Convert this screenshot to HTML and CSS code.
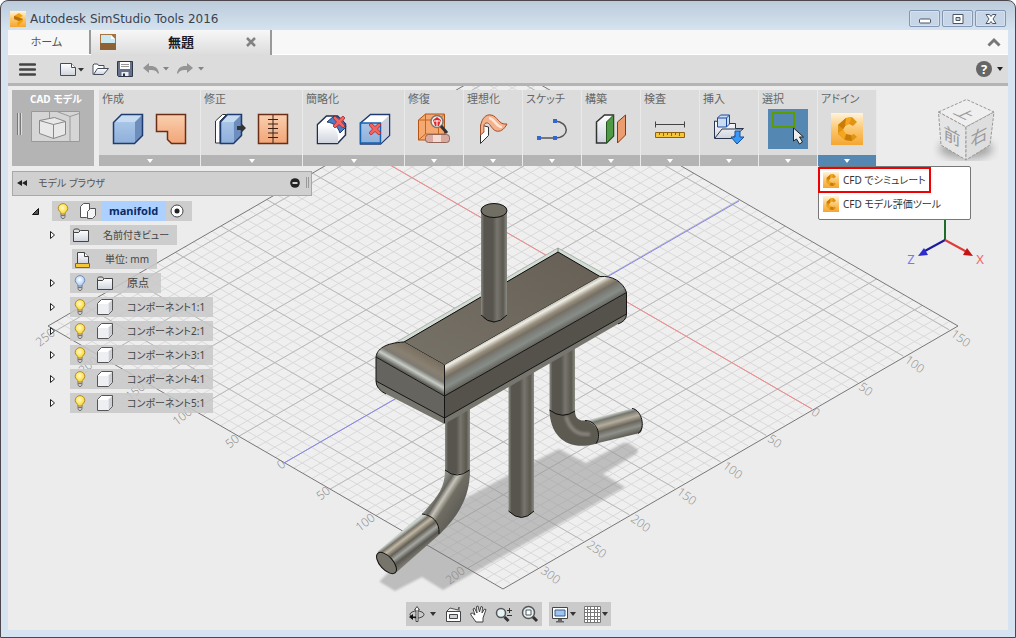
FILE: index.html
```html
<!DOCTYPE html>
<html lang="ja">
<head>
<meta charset="utf-8">
<title>Autodesk SimStudio Tools 2016</title>
<link rel="stylesheet" href="styles.css">
</head>
<body>
<svg class="defs" aria-hidden="true">
  <defs>
    <linearGradient id="gBlue" x1="0" y1="0" x2="0" y2="1"><stop offset="0" stop-color="#a9c5e8"/><stop offset="1" stop-color="#8fb0da"/></linearGradient>
    <linearGradient id="gOrange" x1="0" y1="0" x2="0" y2="1"><stop offset="0" stop-color="#f9cfae"/><stop offset="1" stop-color="#f2a577"/></linearGradient>
    <linearGradient id="gGrey" x1="0" y1="0" x2="0" y2="1"><stop offset="0" stop-color="#ffffff"/><stop offset="1" stop-color="#cfd3dd"/></linearGradient>
    <linearGradient id="gLogo" x1="0" y1="0" x2="0" y2="1"><stop offset="0" stop-color="#fff4dc"/><stop offset=".5" stop-color="#fbc770"/><stop offset="1" stop-color="#f5a62f"/></linearGradient>
    <radialGradient id="gBulb" cx=".45" cy=".4"><stop offset="0" stop-color="#fffbd0"/><stop offset="1" stop-color="#fbdc3c"/></radialGradient>
    <radialGradient id="gBulbOff" cx=".45" cy=".4"><stop offset="0" stop-color="#ffffff"/><stop offset="1" stop-color="#b4d0f5"/></radialGradient>
    <symbol id="bulb" viewBox="0 0 12 16"><path d="M4 10.500h4v3.500L7 15.500H5L4 14z" fill="#c9c9c9" stroke="#666" stroke-width=".8"/><path d="M4 12.500h4" stroke="#777"/><path d="M6 .6a4.800 4.800 0 0 0-4.800 4.800C1.200 8 4 8.500 4 11h4c0-2.500 2.800-3 2.800-5.600A4.800 4.800 0 0 0 6 .6z" fill="url(#gBulb)" stroke="#b88a1c"/></symbol>
    <symbol id="bulb-off" viewBox="0 0 12 16"><path d="M4 10.500h4v3.500L7 15.500H5L4 14z" fill="#c9c9c9" stroke="#666" stroke-width=".8"/><path d="M4 12.500h4" stroke="#777"/><path d="M6 .6a4.800 4.800 0 0 0-4.800 4.800C1.200 8 4 8.500 4 11h4c0-2.500 2.800-3 2.800-5.600A4.800 4.800 0 0 0 6 .6z" fill="url(#gBulbOff)" stroke="#6a8cbc"/></symbol>
    <symbol id="body" viewBox="0 0 16 16"><path d="M.5 4.500l4-4h11v11l-4 4H.5z" fill="#fff" stroke="#555" stroke-linejoin="round"/><path d="M11.500 15V4.500L15 1V11.500z" fill="#cdcfd6"/><path d="M1 5h10v10H1z" fill="#eeeff3"/></symbol>
    <symbol id="folder" viewBox="0 0 16 14"><path d="M.5 13.500V2.500l1-1.500h4l1 1.500v2h-6" fill="#ddd" stroke="#444"/><path d="M.5 4.500h5l2-2h8v11H.5z" fill="url(#gGrey)" stroke="#444"/></symbol>
    <symbol id="logo" viewBox="0 0 32 32"><path fill="url(#gLogo)" d="M0 0h32v32H0z"/><path d="M15 5l6-1 5 5-4 4-4-2-4 2-2 4 3 5 4 1 4-2 3 3-5 4-7-1-7-6V12z" fill="#e29312"/><path d="M7 12l8-7 0 7-3 4zM14 27l1-6 5 1 1 6z" fill="#c97d08"/><path d="M15 5l6-1-3 7-4 2zM7 20l5-3 3 4-2 5z" fill="#f4a71c"/></symbol>
    <symbol id="redx" viewBox="0 0 12 12"><path d="M2 0l4 3.500L10 0l2 2-3.500 4L12 10l-2 2-4-3.500L2 12l-2-2 3.500-4L0 2z" fill="#f2655f" stroke="#b3202a" stroke-width=".8"/></symbol>
  </defs>
</svg>

<div class="window">
  <header class="titlebar">
    <svg class="app-icon" viewBox="0 0 16 16"><path fill="url(#gLogo)" d="M0 0h16v16H0z"/><path d="M4 5l5-3 4 3-4 2 4 1v2l-5 5-1-3 2-2-5-2z" fill="#f0a010"/><path d="M4 5l4 1 5 2-4 2-5-2z" fill="#b67208"/></svg>
    <h1 class="title">Autodesk SimStudio Tools 2016</h1>
    <div class="win-buttons">
      <button aria-label="最小化"><svg width="14" height="10" viewBox="0 0 14 10"><rect x="1.500" y="5" width="11" height="4" rx="1" fill="#fff" stroke="#4b5566"/></svg></button>
      <button aria-label="最大化"><svg width="14" height="10" viewBox="0 0 14 10"><path fill-rule="evenodd" d="M2 .5h10v9H2zM5 3.500v3h4v-3z" fill="#fff" stroke="#4b5566"/></svg></button>
      <button aria-label="閉じる"><svg width="14" height="10" viewBox="0 0 14 10"><path d="M2 .5h3.500L7 2.500 8.500.5H12L9 5l3 4.500H8.500L7 7.500 5.500 9.500H2L5 5z" fill="#fff" stroke="#4b5566"/></svg></button>
    </div>
  </header>

  <nav class="tabs">
    <button class="tab">ホーム</button>
    <div class="tab tab-active">
      <svg class="tab-icon" viewBox="0 0 16 16"><path d="M0 0h16v16H0z" fill="#a6743f"/><path d="M0 9h16v7H0z" fill="#8f6236"/><path d="M1 1h10l4 4v4H1z" fill="#cbe8f0"/><path d="M11 1v4h4z" fill="#fff"/></svg>
      <button class="tab-name">無題</button>
      <button class="tab-close" aria-label="タブを閉じる"><svg width="10" height="10" viewBox="0 0 10 10"><path d="M1 1l8 8M9 1L1 9" stroke="#828282" stroke-width="2.500"/></svg></button>
    </div>
    <button class="collapse" aria-label="折りたたむ"><svg width="14" height="10" viewBox="0 0 14 10"><path d="M1.500 8.500L7 3l5.500 5.500" fill="none" stroke="#777" stroke-width="3"/></svg></button>
  </nav>

  <div class="quickbar">
    <button class="menu" aria-label="メニュー"><svg width="17" height="13" viewBox="0 0 17 13"><path d="M1 1.500h15M1 6.500h15M1 11.500h15" stroke="#444" stroke-width="2.400" stroke-linecap="round"/></svg></button>
    <button aria-label="新規"><svg width="24" height="14" viewBox="0 0 24 14"><path d="M.5 1.500h11l4 4v8H.5z" fill="url(#gGrey)" stroke="#444c5c"/><path d="M11.500 1.500v4h4" fill="#fff" stroke="#444c5c"/><path d="M18 6h6l-3 3.500z" fill="#333"/></svg></button>
    <button aria-label="開く"><svg width="17" height="14" viewBox="0 0 17 14"><path d="M1 12.500V3l1-1h3.500l1 1.500H12v3" fill="#fff" stroke="#444c5c"/><path d="M1.500 12.500l4-6h11l-5 6z" fill="url(#gGrey)" stroke="#444c5c"/></svg></button>
    <button aria-label="保存"><svg width="16" height="16" viewBox="0 0 16 16"><path d="M.5.5h15v15h-14l-1-1z" fill="#66718a" stroke="#2f3748"/><path d="M3 1h10v7H3z" fill="#fff"/><path d="M4 3.500h8M4 5.500h8" stroke="#999"/><path d="M4.500 11h7v4h-7z" fill="#e9edf4"/><path d="M6 12.500h2V15H6z" fill="#333"/></svg></button>
    <button class="undo" aria-label="元に戻す"><svg width="26" height="12" viewBox="0 0 26 12"><path d="M0 5l6-5v3c6-.5 9 2 10 7l-1 1c-1-3.500-4-4.500-9-4v3z" fill="#949494"/><path d="M20 4h6l-3 3.500z" fill="#858585"/></svg></button>
    <button aria-label="やり直し"><svg width="27" height="12" viewBox="0 0 27 12"><path d="M16 5l-6-5v3C4 2.500 1 5 0 10l1 1c1-3.500 4-4.500 9-4v3z" fill="#949494"/><path d="M21 4h6l-3 3.500z" fill="#858585"/></svg></button>
    <button class="help" aria-label="ヘルプ"><span class="help-mark">?</span><svg width="6" height="4" viewBox="0 0 6 4"><path d="M0 0h6L3 4z" fill="#222"/></svg></button>
  </div>

  <main class="workspace">
    <svg class="scene" viewBox="8 86 1000 544" preserveAspectRatio="xMidYMid slice" role="img" aria-label="manifold モデル">
      <defs>
        <linearGradient id="pipe"><stop offset="0" stop-color="#8a8c84"/><stop offset=".12" stop-color="#57554e"/><stop offset=".45" stop-color="#58554e"/><stop offset=".62" stop-color="#77756d"/><stop offset=".85" stop-color="#5b584f"/><stop offset="1" stop-color="#8a8c84"/></linearGradient>
        <linearGradient id="fillet" gradientUnits="userSpaceOnUse" x1="520" y1="321" x2="534" y2="346"><stop offset="0" stop-color="#b5b1a4"/><stop offset=".12" stop-color="#efeee6"/><stop offset=".3" stop-color="#99907f"/><stop offset=".45" stop-color="#756f64"/><stop offset=".62" stop-color="#7f827d"/><stop offset=".75" stop-color="#878d88"/><stop offset="1" stop-color="#605d55"/></linearGradient>
        <linearGradient id="endfillet" gradientUnits="userSpaceOnUse" x1="425" y1="353" x2="412" y2="376"><stop offset="0" stop-color="#766e60"/><stop offset=".4" stop-color="#8a8071"/><stop offset=".62" stop-color="#7d7b73"/><stop offset=".8" stop-color="#c6cbc5"/><stop offset="1" stop-color="#62615b"/></linearGradient>
        <linearGradient id="topface" x1="0" y1="1" x2="1" y2="0"><stop offset="0" stop-color="#777267"/><stop offset="1" stop-color="#665f55"/></linearGradient>
        <linearGradient id="tubeL" gradientUnits="userSpaceOnUse" x1="400" y1="534" x2="416" y2="555"><stop offset="0" stop-color="#c9d0cb"/><stop offset=".12" stop-color="#757268"/><stop offset=".25" stop-color="#c0b7a4"/><stop offset=".45" stop-color="#645f55"/><stop offset=".62" stop-color="#a4a7a2"/><stop offset=".8" stop-color="#595750"/><stop offset="1" stop-color="#78776f"/></linearGradient>
        <linearGradient id="bendL" gradientUnits="userSpaceOnUse" x1="435" y1="492" x2="460" y2="508"><stop offset="0" stop-color="#8b9089"/><stop offset=".2" stop-color="#68665e"/><stop offset=".35" stop-color="#c7c5bb"/><stop offset=".55" stop-color="#706d63"/><stop offset="1" stop-color="#5f5e57"/></linearGradient>
        <linearGradient id="tubeR" gradientUnits="userSpaceOnUse" x1="609" y1="414" x2="616" y2="439"><stop offset="0" stop-color="#dde2dc"/><stop offset=".15" stop-color="#74766e"/><stop offset=".35" stop-color="#b5ac9c"/><stop offset=".55" stop-color="#6b675d"/><stop offset=".75" stop-color="#8e908a"/><stop offset="1" stop-color="#5e5b53"/></linearGradient>
        <filter id="soft"><feGaussianBlur stdDeviation="1"/></filter>
        <filter id="haze"><feGaussianBlur stdDeviation="4"/></filter>
        <clipPath id="plane"><path d="M48 326l455-263 455 263-455 263z"/></clipPath>
      </defs>
      <g clip-path="url(#plane)" fill="none">
        <path d="M48 326l455-263 455 263-455 263z" fill="#efefef"/>
        <path id="minor" stroke="#d9d9d9"/>
        <path id="major" stroke="#b9b9b9"/>
      </g>
      <path d="M380 581l78-79 77-41 24-12 27 14 37-20q4-1 7 1l6 4q4 3 0 6l-33 20 22 13-182 103-21-13-27 14-15-9z" fill="#999" fill-opacity=".57" filter="url(#soft)"/>
      <path d="M48 326l455-263 455 263-455 263z" fill="none" stroke="#777"/>
      <path d="M366 151l446 258" stroke="#f58a8a"/>
      <path d="M284 463l455-262" stroke="#8585ee"/>
      <g class="ticks">
        <text transform="translate(45 337) rotate(-38)">250</text><text transform="translate(88 365) rotate(-38)">200</text><text transform="translate(135 391) rotate(-38)">150</text><text transform="translate(182 416) rotate(-38)">100</text><text transform="translate(232 441) rotate(-38)">50</text><text transform="translate(281 464) rotate(-38)">0</text><text transform="translate(323 493) rotate(-38)">50</text><text transform="translate(365 522) rotate(-38)">100</text><text transform="translate(455 575) rotate(-38)">200</text>
        <text transform="translate(961 338) rotate(36)">150</text><text transform="translate(915 364) rotate(36)">100</text><text transform="translate(866 389) rotate(36)">50</text><text transform="translate(816 412) rotate(36)">0</text><text transform="translate(775 441) rotate(36)">50</text><text transform="translate(733 470) rotate(36)">100</text><text transform="translate(687 496) rotate(36)">150</text><text transform="translate(641 523) rotate(36)">200</text><text transform="translate(597 549) rotate(36)">250</text><text transform="translate(551 575) rotate(36)">300</text>
      </g>
      <g stroke-linejoin="round">
        <path d="M445 400h25v72q-12 8-25 0z" fill="url(#pipe)"/>
        <path d="M445 470q12 8 25 0c0 27-11 45-30 64-1-12-9-20-18-20 15-17 23-25 23-44z" fill="url(#bendL)"/>
        <path d="M422 514c10 1 18 8 18 20l-45 39.500-17.500-22z" fill="url(#tubeL)"/>
        <path d="M422 514c10 1 18 8 17 20M445 470q12 10 24.500 0" fill="none" stroke="#111"/>
        <ellipse cx="386.500" cy="563" rx="6.500" ry="13" transform="rotate(-42 386.500 563)" fill="#77756b" stroke="#111"/>
        <path d="M508.500 365H534v146q-12 13-25.500 0z" fill="url(#pipe)"/><path d="M508.500 511q13 13 25.500 0" fill="none" stroke="#111"/>
        <path d="M549.500 345H575v67q-12 7-25.500-1z" fill="url(#pipe)"/>
        <path d="M549.500 410q13 8 25.500 1c0 7 4 10 10 9.500 10 2 18 12 12 23-27 8-47-5-47.500-33.500z" fill="#5d5a51"/>
        <path d="M566 416c3 13 12 20 24 18" fill="none" stroke="#85817a" stroke-width="4" filter="url(#soft)"/>
        <path d="M585 420.500l47-12c9 0 14 20 8 24.500l-44 10.500c6-12-1-21-11-23z" fill="url(#tubeR)"/>
        <path d="M549.500 410q13 10 25.500 1M585 420.500c12 0 17 15 11 23M632 408.500c10 1 14 20 6 25" fill="none" stroke="#111"/>
        <path d="M394 343.500l164-95.500 50 28-8 1-42-24.500L404 342z" fill="#d3dcd5" stroke="#a9b1a9"/>
        <path d="M558 248v4" stroke="#888"/>
        <path d="M404 342l154-90 42 24.500L444.500 365z" fill="url(#topface)" stroke="#0c0c0c"/>
        <path d="M444.500 365L600 276.500c12-1 23 5 26.500 16l-182 104z" fill="url(#fillet)"/>
        <path d="M404 342l40.500 23v31L376 357c1-8 9-14 28-15z" fill="url(#endfillet)"/>
        <path d="M376 381q0 8 10 13l58.500 30L618 324q8.500-3 8.500-10l-182 98z" fill="#77766e"/>
        <path d="M444.500 396l182-103.500V314l-182 104z" fill="#54524b"/>
        <path d="M444.500 396L376 357v24l68.500 37z" fill="#65645f"/>
        <path d="M444.500 365v58M600 276.500c12-1 23 5 26.500 16V314q0 7-8.500 10M444.500 396L376 357c1-8 9-14 28-15M376 357v24l68.500 37 182-104M376 381q0 8 10 13M444.500 396l182-103.500" fill="none" stroke="#141414"/>
        <path d="M481 211h26v105q-13 13-26 0z" fill="url(#pipe)"/>
        <path d="M481 315q13 14 26 0" fill="none" stroke="#111"/>
        <ellipse cx="494" cy="210.500" rx="13" ry="7" fill="#716e64" stroke="#111"/>
      </g>
      <ellipse cx="966" cy="149" rx="27" ry="10" fill="#777" opacity=".6" filter="url(#haze)"/>
      <g stroke="#999" stroke-dasharray="3 1.500" stroke-linejoin="round">
        <path d="M938.500 112l28-12.500L994 112l-28 15z" fill="#efefef"/><path d="M938.500 112l27.500 15v33l-25-15z" fill="#e5e5e5"/><path d="M994 112l-28 15v33l24-15z" fill="#dedede"/>
      </g>
      <g class="cube-faces"><text transform="translate(965 114) matrix(.85 .4 -.85 .4 0 0)">上</text><text transform="translate(952 136) skewY(28)">前</text><text transform="translate(979 136) skewY(-28)">右</text></g>
      <path d="M945 240v-24" stroke="#1f6b2c" stroke-width="2"/><path d="M945 240l-22 12" stroke="#1a1a9c" stroke-width="2"/><path d="M945 240l22 12" stroke="#e03a3a" stroke-width="2"/>
      <path d="M918 256l6-8 4 7z" fill="#2d2dcf"/><path d="M973 256l-6-8-4 7z" fill="#c51414"/>
      <text class="axis" x="911" y="264" fill="#7676f5">Z</text><text class="axis" x="980" y="264" fill="#f75f5f">X</text>
    </svg>

    <div class="ribbon">
      <button class="mode"><span>CAD モデル</span>
        <svg width="64" height="32" viewBox="0 0 64 32"><path d="M1.500 3v22M4.500 3v22" stroke="#777"/><path d="M2.500 3v22M5.500 3v22" stroke="#ddd"/><path d="M15.500 1.500h48v30h-48z" fill="#d5d5d5" stroke="#999"/><path d="M33.500 1.500v10M41 1.500l13 5 9-3M54 6.500v25" fill="none" stroke="#999"/><path d="M23.500 10.500l15-3 11 4v13l-12 4-14-5z" fill="#e8e8e8" stroke="#888"/><path d="M23.500 10.500l14 4 12-3M37.500 14.500v14" fill="none" stroke="#888"/></svg>
      </button>
      <div class="groups">
        <section class="group wide"><h2>作成</h2><div class="tools">
          <button aria-label="ボックス"><svg viewBox="0 0 32 32"><path d="M1.500 9.500l8-8h21v21l-8 8h-21z" fill="#c7dcf0"/><path d="M23 9l7.500-7.500v21L23 30z" fill="#6d8dbd"/><path d="M2 9h21v21H2z" fill="url(#gBlue)"/><path d="M1.500 9.500l8-8h21v21l-8 8h-21z" fill="none" stroke="#1f3b70" stroke-width="1.500"/></svg></button>
          <button aria-label="押し出し"><svg viewBox="0 0 32 32"><path d="M1.500 1.500h29v29h-14l-4-4v-8h-11z" fill="url(#gOrange)" stroke="#6b2d14" stroke-width="1.500"/></svg></button></div><button class="more" aria-label="作成メニュー"></button></section>
        <section class="group wide"><h2>修正</h2><div class="tools">
          <button aria-label="プレス/プル"><svg viewBox="0 0 32 32"><path d="M1.500 8l7-6.500h4L6 8v22H1.500z" fill="#fff" stroke="#333"/><path d="M6.500 9l7-7.500h14v21l-8 8h-13z" fill="#c7dcf0"/><path d="M19.500 9.500l8-8v21l-8 8z" fill="#6d8dbd"/><path d="M6.500 9h13v21h-13z" fill="url(#gBlue)"/><path d="M6.500 9l7-7.500h14v21l-8 8h-13z" fill="none" stroke="#1f3b70" stroke-width="1.500"/><path d="M23 13h4v-3l5 5-5 5v-3h-4z" fill="#333"/></svg></button>
          <button aria-label="ステッチ"><svg viewBox="0 0 32 32"><path d="M1.500 1.500h29v29h-29z" fill="url(#gOrange)" stroke="#6b2d14" stroke-width="1.500"/><path d="M16 2v28M11 6.500h10M11 11h10M11 15.500h10M11 20h10M11 24.500h10" stroke="#3b2218"/></svg></button></div><button class="more" aria-label="修正メニュー"></button></section>
        <section class="group wide"><h2>簡略化</h2><div class="tools">
          <button aria-label="フェイス削除"><svg viewBox="0 0 32 32"><path d="M1.500 11.500l9-8.500h11l8 8v11l-8 8.500h-20z" fill="#fff" stroke="#1f3050" stroke-width="1.500"/><path d="M2 12h10c6 1 9 6 10 11v7H2z" fill="url(#gGrey)"/><path d="M11 9l7-6c6 1 10 4 12 11l-6 6c-2-6-6-10-13-11z" fill="#4b7cc8" stroke="#1f3b70"/><use href="#redx" x="17" y="3" width="12" height="12"/></svg></button>
          <button aria-label="フィーチャ削除"><svg viewBox="0 0 32 32"><path d="M1.500 10l10-8.500h19v21l-9 8.500h-20z" fill="#fff" stroke="#1f3b70" stroke-width="1.500"/><path d="M22 10l8-7.500V22l-8 8z" fill="#cbd0dc"/><path d="M1.500 10h20v20h-20z" fill="url(#gBlue)" stroke="#1562b0" stroke-width="1.500"/><use href="#redx" x="10" y="10" width="12" height="12"/></svg></button></div><button class="more" aria-label="簡略化メニュー"></button></section>
        <section class="group"><h2>修復</h2><div class="tools">
          <button aria-label="修復"><svg viewBox="0 0 32 32"><path d="M.5 7l7-6h19v20l-6 6H.5z" fill="#f5a870" stroke="#b15516"/><path d="M.5 7h20v20M20.500 7l6-6M7.500 1v20l-7 6M7.500 21h19" fill="none" stroke="#c6641e"/><circle cx="19" cy="8.500" r="6" fill="#fdeee8" stroke="#777" stroke-width="1.500"/><path d="M15 7l4-3 4 3-2 6h-4z" fill="#e02a2a"/><path d="M19 7v6M16 8h6" stroke="#fff"/><path d="M23 13l6 7" stroke="#333" stroke-width="3"/><rect x="7.500" y="21.500" width="24" height="8" rx="3" fill="#d9aa9d" stroke="#916459"/><path d="M15 22h8v7h-8z" fill="#f3dbd4"/></svg></button></div><button class="more" aria-label="修復メニュー"></button></section>
        <section class="group"><h2>理想化</h2><div class="tools">
          <button aria-label="中立面"><svg viewBox="0 0 32 32"><path d="M3.500 12v18.500l8-8V14z" fill="#fff" stroke="#333"/><path d="M3.500 13C5 5 9 1 14 2c7 1 7 10 16 9-3 6-7 8-11 7-5-2-6-9-10-8-3 1-2 5-2 9l-3.500 3z" fill="#f3b28d" stroke="#a4512b"/><path d="M12 5c6 1 7 9 13 9" stroke="#fde4d3" stroke-width="2.500" fill="none"/></svg></button></div><button class="more" aria-label="理想化メニュー"></button></section>
        <section class="group"><h2>スケッチ</h2><div class="tools">
          <button aria-label="スケッチ"><svg viewBox="0 0 32 32"><path d="M3 25h16M19 8c15 1 15 17 0 17" fill="none" stroke="#555" stroke-width="1.500"/><path d="M1 23h4v4H1zM17 23h4v4h-4zM17 6h4v4h-4z" fill="#3567cf"/></svg></button></div><button class="more" aria-label="スケッチメニュー"></button></section>
        <section class="group"><h2>構築</h2><div class="tools">
          <button aria-label="構築"><svg viewBox="0 0 32 32"><path d="M1.500 9l8-7h9v21l-7 7h-10z" fill="url(#gGrey)" stroke="#333" stroke-width="1.500"/><path d="M11.500 9l7-7v21l-7 7z" fill="#4f9b45" stroke="#24551f"/><path d="M22.500 9l8-7v20l-8 8z" fill="#eb9d70" stroke="#843818"/></svg></button></div><button class="more" aria-label="構築メニュー"></button></section>
        <section class="group"><h2>検査</h2><div class="tools">
          <button aria-label="計測"><svg viewBox="0 0 32 32"><path d="M2 11.500h28M1.500 8.500v6M30.500 8.500v6" stroke="#444"/><path d="M1.500 19.500h29v5h-29z" fill="#f5c53a" stroke="#8f6210"/><path d="M5.500 20v2M9.500 20v3M13.500 20v2M17.500 20v3M21.500 20v2M25.500 20v3" stroke="#8f6210"/></svg></button></div><button class="more" aria-label="検査メニュー"></button></section>
        <section class="group"><h2>挿入</h2><div class="tools">
          <button aria-label="挿入"><svg viewBox="0 0 32 32"><path d="M1.500 8v17.500h17l12-10h-8v-5h-6z" fill="url(#gGrey)" stroke="#27364f"/><path d="M2 25l7-9h21" fill="none" stroke="#27364f"/><path d="M4.500 5l3-3h9v9l-3 3h-9z" fill="#c9dcf4" stroke="#1f4a9c"/><path d="M4.500 5h9v9M13.500 5l3-3" fill="none" stroke="#1f4a9c"/><path d="M22 18h5v6h4l-7 7-6-7h4z" fill="#3998f5" stroke="#14509c"/></svg></button></div><button class="more" aria-label="挿入メニュー"></button></section>
        <section class="group"><h2>選択</h2><div class="tools">
          <button class="picked" aria-label="選択"><svg viewBox="0 0 40 40"><path d="M5 4h21v14H5z" fill="none" stroke="#5c9c00" stroke-width="2"/><path d="M25.500 19v13l3-2 3 5 3-2-3-5h4z" fill="#eee" stroke="#222"/></svg></button></div><button class="more" aria-label="選択メニュー"></button></section>
        <section class="group addin"><h2>アドイン</h2><div class="tools">
          <button aria-label="CFD"><svg viewBox="0 0 32 32"><use href="#logo"/></svg></button></div><button class="more open" aria-label="アドインメニュー"></button>
          <div class="dropdown">
            <button class="marked"><svg viewBox="0 0 32 32"><use href="#logo"/></svg>CFD でシミュレート</button>
            <button><svg viewBox="0 0 32 32"><use href="#logo"/></svg>CFD モデル評価ツール</button>
          </div></section>
      </div>
    </div>

    <aside class="browser">
      <div class="browser-head">
        <svg width="11" height="8" viewBox="0 0 11 8"><path d="M5 1v6L0 4zM10 1v6L5 4z" fill="#222"/></svg>
        <h2>モデル ブラウザ</h2>
        <button aria-label="最小化"><svg width="10" height="10" viewBox="0 0 10 10"><circle cx="5" cy="5" r="4.800" fill="#222"/><path d="M2.500 5h5" stroke="#fff" stroke-width="1.600"/></svg></button>
        <span class="grip"></span>
      </div>
      <ul class="tree">
        <li class="root"><button class="twist" aria-label="閉じる"><svg width="7" height="7" viewBox="0 0 7 7"><path d="M6.500 .5v6h-6z" fill="#555" stroke="#111"/></svg></button><span class="row"><svg class="bulb"><use href="#bulb"/></svg><svg width="16" height="16" viewBox="0 0 16 16"><path d="M.5 3.500l3-3h6v11l-3 3h-6z" fill="#fff" stroke="#555"/><path d="M7.500 8.500l3-3h5v7l-3 3h-5z" fill="#f4f4f6" stroke="#555"/></svg><strong>manifold</strong><svg width="14" height="14" viewBox="0 0 14 14"><circle cx="7" cy="7" r="6" fill="#fff" stroke="#444"/><circle cx="7" cy="7" r="2.500" fill="#222"/></svg></span></li>
        <li><button class="twist" aria-label="開く"><svg width="5" height="8" viewBox="0 0 5 8"><path d="M.5.5L4.500 4 .5 7.500z" fill="#fff" stroke="#222"/></svg></button><span class="row"><svg class="folder"><use href="#folder"/></svg><span class="name">名前付きビュー</span></span></li>
        <li><span class="twist"></span><span class="row unit"><svg width="16" height="17" viewBox="0 0 16 17"><path d="M2.500 13V1.500h7l4 4V13z" fill="url(#gGrey)" stroke="#444"/><path d="M9.500 1.500v4h4" fill="#fff" stroke="#444"/><path d="M.5 12.500h14v4H.5z" fill="#f5c53a" stroke="#8f6210"/></svg><span class="name">単位: mm</span></span></li>
        <li><button class="twist" aria-label="開く"><svg width="5" height="8" viewBox="0 0 5 8"><path d="M.5.5L4.500 4 .5 7.500z" fill="#fff" stroke="#222"/></svg></button><span class="row"><svg class="bulb"><use href="#bulb-off"/></svg><svg class="folder"><use href="#folder"/></svg><span class="name short">原点</span></span></li>
        <li><button class="twist" aria-label="開く"><svg width="5" height="8" viewBox="0 0 5 8"><path d="M.5.5L4.500 4 .5 7.500z" fill="#fff" stroke="#222"/></svg></button><span class="row comp"><svg class="bulb"><use href="#bulb"/></svg><svg class="body"><use href="#body"/></svg><span class="name">コンポーネント1:1</span></span></li>
        <li><button class="twist" aria-label="開く"><svg width="5" height="8" viewBox="0 0 5 8"><path d="M.5.5L4.500 4 .5 7.500z" fill="#fff" stroke="#222"/></svg></button><span class="row comp"><svg class="bulb"><use href="#bulb"/></svg><svg class="body"><use href="#body"/></svg><span class="name">コンポーネント2:1</span></span></li>
        <li><button class="twist" aria-label="開く"><svg width="5" height="8" viewBox="0 0 5 8"><path d="M.5.5L4.500 4 .5 7.500z" fill="#fff" stroke="#222"/></svg></button><span class="row comp"><svg class="bulb"><use href="#bulb"/></svg><svg class="body"><use href="#body"/></svg><span class="name">コンポーネント3:1</span></span></li>
        <li><button class="twist" aria-label="開く"><svg width="5" height="8" viewBox="0 0 5 8"><path d="M.5.5L4.500 4 .5 7.500z" fill="#fff" stroke="#222"/></svg></button><span class="row comp"><svg class="bulb"><use href="#bulb"/></svg><svg class="body"><use href="#body"/></svg><span class="name">コンポーネント4:1</span></span></li>
        <li><button class="twist" aria-label="開く"><svg width="5" height="8" viewBox="0 0 5 8"><path d="M.5.5L4.500 4 .5 7.500z" fill="#fff" stroke="#222"/></svg></button><span class="row comp"><svg class="bulb"><use href="#bulb"/></svg><svg class="body"><use href="#body"/></svg><span class="name">コンポーネント5:1</span></span></li>
      </ul>
    </aside>

    <div class="navbar">
      <div class="nav-group">
        <button aria-label="オービット"><svg width="28" height="18" viewBox="0 0 28 18"><ellipse cx="8" cy="9.500" rx="7" ry="3.500" fill="none" stroke="#444"/><path d="M7 16.500V5H5.500L8 1.500 10.500 5H9v11.500z" fill="#fff" stroke="#444"/><path d="M0 12l4-3v6zM3 11.500h4v1.500H3z" fill="#111"/><path d="M21 7h6l-3 4z" fill="#333"/></svg></button>
        <button aria-label="ビュー面"><svg width="17" height="17" viewBox="0 0 17 17"><path d="M2 5l3-3 8 2 1-3v4" fill="#eee" stroke="#555"/><path d="M1.500 5.500h14v10h-14z" fill="#fff" stroke="#444"/><path d="M4.500 8.500h8v4h-8z" fill="#ccd1d7" stroke="#444"/></svg></button>
        <button aria-label="画面移動"><svg width="17" height="18" viewBox="0 0 17 18"><path d="M6 17L1 10 .7 8.500l1.500-.5L5 10 3 4l1.500-.8L7 8 6.500 1.500 8 1l1.500 6L11 1.500l1.500.5-.5 6 2.500-4 1.500.5L13 13v4z" fill="#fff" stroke="#444"/></svg></button>
        <button aria-label="ズーム"><svg width="18" height="17" viewBox="0 0 18 17"><circle cx="6" cy="7" r="4.500" fill="#e3f2f4" stroke="#555" stroke-width="1.500"/><path d="M9.500 11l4 4" stroke="#333" stroke-width="3"/><path d="M12 4.500h5M14.500 2v5M12 9.500h5" stroke="#333"/></svg></button>
        <button aria-label="フィット"><svg width="18" height="18" viewBox="0 0 18 18"><circle cx="7.500" cy="7.500" r="6" fill="#e3f2f4" stroke="#555" stroke-width="1.500"/><path d="M5 5h5v5H5z" fill="#fff" stroke="#555"/><path d="M12 12l4 4" stroke="#333" stroke-width="3"/></svg></button>
      </div>
      <div class="nav-group">
        <button aria-label="表示設定"><svg width="24" height="17" viewBox="0 0 24 17"><path d="M.5 1.500h15v11H.5z" fill="#fff" stroke="#444"/><path d="M3 4h10v6H3z" fill="#9fc4ee" stroke="#345a8c"/><path d="M6 13h4v2H6zM4 15h8v1.500H4z" fill="#666"/><path d="M18 6h6l-3 4z" fill="#333"/></svg></button>
        <button aria-label="グリッド"><svg width="24" height="17" viewBox="0 0 24 17"><path d="M.5.5h16v16H.5z" fill="#fff"/><path d="M.5.5h16v16H.5zM3.500.5v16M6.500.5v16M10.500.5v16M13.500.5v16M.5 3.500h16M.5 6.500h16M.5 10.500h16M.5 13.500h16" fill="none" stroke="#777"/><path d="M18 6h6l-3 4z" fill="#333"/></svg></button>
      </div>
    </div>
  </main>
</div>
<script src="grid.js"></script>
</body>
</html>
```
FILE: styles.css
```css
* { box-sizing: border-box; }

body {
  margin: 0;
  background: #fff;
  font-family: "Noto Sans", "Noto Sans CJK JP", sans-serif;
  font-size: 11px;
  line-height: 16px;
  color: #444;
  font-feature-settings: "palt";
}

button {
  margin: 0;
  padding: 0;
  border: 0;
  background: none;
  font: inherit;
  color: inherit;
  font-feature-settings: inherit;
}

svg { display: block; flex: none; }
h1, h2, ul { margin: 0; padding: 0; font-weight: 400; }
h2 { font-size: 11px; }

.defs { position: absolute; width: 0; height: 0; }

.window {
  display: flex;
  flex-direction: column;
  min-height: 100vh;
  padding: 0 7px 7px 7px;
  border: 1px solid #4c474c;
  border-radius: 8px 8px 0 0;
  background: #d6e4f1;
  background-image: linear-gradient(#bccbda, #d6e4f1 30px);
}

.titlebar {
  display: flex;
  align-items: center;
  gap: 4px;
  height: 29px;
  padding: 6px 2px 0 2px;
}
.app-icon { width: 16px; height: 16px; }
.title {
  flex: 1;
  font-family: "DejaVu Sans", sans-serif;
  font-size: 12px;
  color: #39434f;
}
.win-buttons { display: flex; gap: 2px; }
.win-buttons button {
  display: grid;
  place-items: center;
  width: 31px;
  height: 17px;
  border: 1px solid #8496b4;
  border-radius: 2px;
  background: #c6d6e7;
  box-shadow: inset 0 0 0 1px #d5e1ee;
}

.tabs {
  display: flex;
  height: 25px;
  background: #f7f7f7;
  border-bottom: 1px solid #fff;
}
.tab {
  width: 83px;
  padding-right: 4px;
  border-right: 2px solid #999;
  color: #555;
}
.tab-active {
  display: flex;
  align-items: center;
  width: 181px;
  height: 25px;
  padding: 0 14px 2px 9px;
  background: linear-gradient(#f7f7f7, #dcdcdc);
}
.tab-icon { width: 16px; height: 16px; }
.tab-name {
  flex: 1;
  font-size: 13px;
  font-weight: 700;
  color: #1b1b28;
}
.collapse { margin-left: auto; padding-right: 7px; }

.quickbar {
  display: flex;
  align-items: center;
  gap: 8px;
  height: 31px;
  padding: 0 5px 0 11px;
  background: #dcdcdc;
  border-bottom: 3px solid #b4b4b4;
}
.menu { margin-right: 16px; }
.undo { margin-left: 2px; }
.help {
  display: flex;
  align-items: center;
  gap: 5px;
  margin-left: auto;
}
.help-mark {
  width: 16px;
  height: 16px;
  border-radius: 8px;
  background: #666;
  color: #fff;
  font-size: 13px;
  font-weight: 700;
}

.workspace {
  position: relative;
  display: flex;
  flex: 1;
  flex-direction: column;
  min-height: 544px;
  padding: 4px;
  background: #ececec;
}
.scene {
  position: absolute;
  inset: 0;
  width: 100%;
  height: 100%;
}
.ticks { fill: #888; font-family: "Open Sans", sans-serif; font-size: 12px; font-weight: 300; text-anchor: middle; dominant-baseline: central; }
.cube-faces { fill: #999; font-size: 17px; text-anchor: middle; dominant-baseline: central; }
.axis { font-size: 13px; text-anchor: middle; }

.ribbon { position: relative; z-index: 2; display: flex; gap: 5px; }
.mode {
  display: flex;
  flex-direction: column;
  align-items: flex-start;
  gap: 3px;
  width: 82px;
  height: 76px;
  padding: 1px 4px;
  background: #b4b4b4;
  color: #fff;
  font-size: 10px;
  font-weight: 700;
}
.mode span { margin-left: 14px; }
.groups { display: flex; }
.group {
  position: relative;
  display: flex;
  flex-direction: column;
  width: 59px;
  height: 76px;
  background: #dcdcdc;
  border-right: 1px solid #e9e9e9;
}
.group.wide { width: 102px; }
.group h2 { padding: 1px 3px 0; color: #666; }
.tools {
  display: flex;
  flex: 1;
  align-items: center;
  justify-content: center;
  gap: 11px;
  padding-bottom: 4px;
}
.tools svg { width: 32px; height: 32px; }
.tools .picked { background: #5487b1; }
.picked svg { width: 40px; height: 40px; }
.more {
  display: grid;
  place-items: center;
  height: 11px;
  background: #b4b4b4;
}
.more::after {
  content: "";
  border: 3px solid transparent;
  border-top: 4px solid #fff;
  border-bottom: 0;
}
.more.open { background: #5487b1; }

.dropdown {
  position: absolute;
  top: 76px;
  left: 0;
  width: 153px;
  padding: 1px 0 3px;
  border: 1px solid #777;
  border-radius: 2px;
  background: #fff;
}
.dropdown button {
  display: flex;
  align-items: center;
  gap: 4px;
  height: 24px;
  padding: 0 4px;
  color: #333;
  font-size: 10px;
  white-space: nowrap;
}
.dropdown svg { width: 16px; height: 16px; }
.dropdown .marked { outline: 2px solid #f00000; outline-offset: -1px; }

.browser { position: relative; padding-top: 5px; }
.browser-head {
  display: flex;
  align-items: center;
  gap: 10px;
  width: 300px;
  height: 25px;
  padding: 0 2px 2px 4px;
  border: 1px solid #a8a8a8;
  background: #d0d0d0;
}
.browser-head h2 { flex: 1; font-size: 10px; color: #555; }
.grip { width: 3px; height: 11px; margin-left: -4px; border: 1px solid #999; border-width: 0 1px; }

.tree {
  display: flex;
  flex-direction: column;
  gap: 4px;
  padding: 5px 0 0 34px;
  list-style: none;
}
.tree li { display: flex; align-items: center; }
.twist { width: 24px; height: 20px; padding-left: 4px; }
.tree .root { margin-left: -18px; }
.root .twist { width: 24px; }
.row {
  display: flex;
  align-items: center;
  gap: 10px;
  height: 20px;
  padding: 0 8px 0 3px;
  background: rgba(200, 200, 200, .85);
}
.root .row { padding-left: 4px; }
.root .row strong {
  height: 20px;
  padding: 2px 8px;
  margin: 0 -6px 0 -5px;
  background: #acd0ff;
  color: #0a2a66;
  font-size: 11px;
}
.bulb { width: 14px; height: 16px; }
.folder { width: 16px; height: 14px; }
.body { width: 16px; height: 16px; }
.name { margin-left: 4px; font-size: 10px; }
.unit { margin-left: 2px; }
.short { margin-right: 4px; font-size: 11px; }

.navbar {
  position: relative;
  display: flex;
  justify-content: center;
  gap: 7px;
  margin-top: auto;
}
.nav-group {
  display: flex;
  align-items: center;
  gap: 8px;
  height: 24px;
  padding: 0 3px;
  background: #cacaca;
}
```
FILE: grid.js
```js
// Draws the ground plane: two families of parallel lines in isometric view.
const slope = 0.578;
const step = 45.7;

function lines(spacing) {
  let d = "";
  for (let k = -35; k <= 35; k++) {
    const a = 284 + k * spacing;
    const b = 812 + k * spacing;
    const ya = 463 + k * spacing * slope;
    const yb = 409 - k * spacing * slope;
    d += `M${a} ${ya}l460 ${-460 * slope}`;
    d += `M${b} ${yb}l-460 ${-460 * slope}`;
  }
  return d;
}

document.getElementById("minor").setAttribute("d", lines(step / 5));
document.getElementById("major").setAttribute("d", lines(step));
```
